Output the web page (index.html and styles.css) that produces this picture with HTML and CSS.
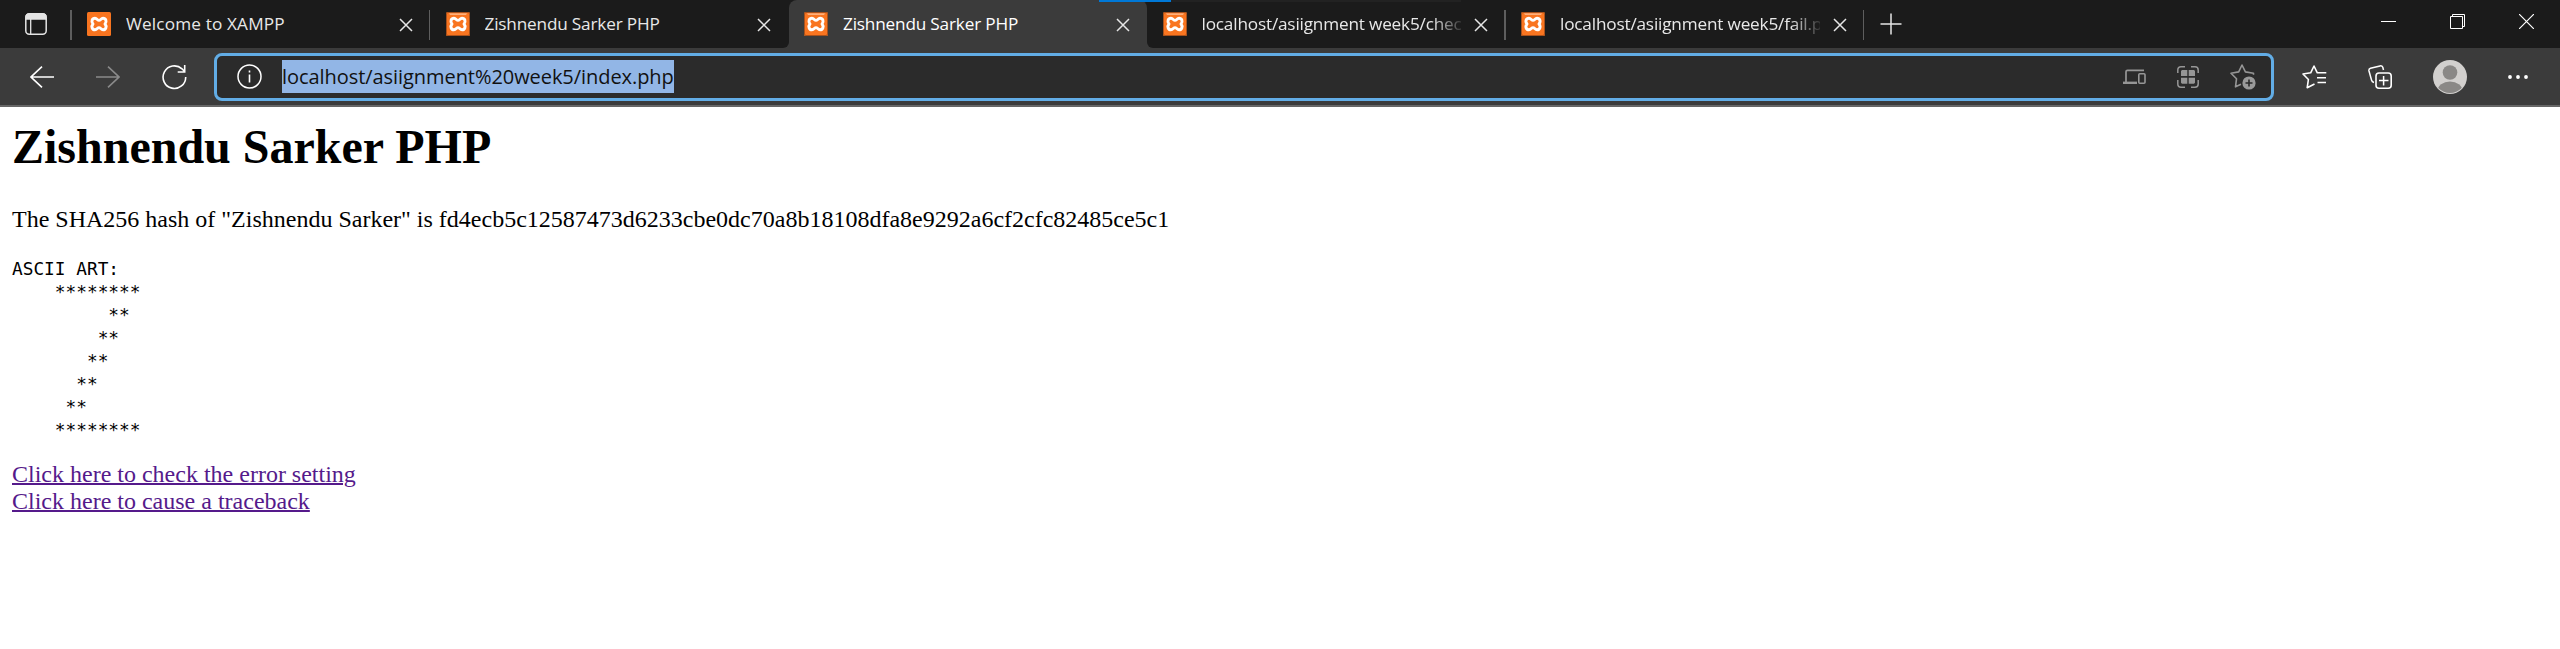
FILE: index.html
```html
<!DOCTYPE html>
<html lang="en">
<head>
<meta charset="utf-8">
<title>Zishnendu Sarker PHP</title>
<link rel="stylesheet" href="styles.css">
</head>
<body>
<svg class="defs" width="0" height="0">
  <symbol id="xampp" viewBox="0 0 24 24">
    <rect width="24" height="24" rx="1.5" fill="#f97520"/>
    <path d="M8 6.200C10 6.200 10.500 8.400 12 8.400S14 6.200 16 6.200C18.800 6.200 20.200 9.400 18 12C20.200 14.600 18.800 17.800 16 17.800C14 17.800 13.500 15.600 12 15.600S10 17.800 8 17.800C5.200 17.800 3.800 14.600 6 12C3.800 9.400 5.200 6.200 8 6.200z" fill="none" stroke="#fff" stroke-width="2.900" stroke-linejoin="round"/>
  </symbol>
  <symbol id="gloss" viewBox="0 0 24 24">
    <rect x=".5" y=".5" width="23" height="23" rx="1.500" fill="none" stroke="#a8511c"/>
    <path d="M3 1.500h18l-1 1.200H4z" fill="#ffc49b"/>
  </symbol>
  <symbol id="close" viewBox="0 0 14 14"><path d="M1 1l12 12M13 1L1 13" stroke="#e6e6e6" stroke-width="1.500" fill="none"/></symbol>
</svg>
<header class="browser">
  <div class="tabs">
    <div class="tab-menu">
      <svg width="22" height="22" viewBox="0 0 22 22"><rect x=".8" y=".8" width="20.400" height="20.400" rx="3.500" fill="none" stroke="#e4e4e4" stroke-width="1.500"/><path d="M1 6V4q0-3 3-3h14q3 0 3 3v2zM5.700 6v15" fill="#e4e4e4" stroke="#e4e4e4" stroke-width="1.300"/></svg>
    </div>
    <div class="tab ruled"><svg class="fav"><use href="#xampp"/></svg><span class="label wide">Welcome to XAMPP</span><svg class="x"><use href="#close"/></svg></div>
    <div class="tab before-active"><svg class="fav"><use href="#xampp"/><use href="#gloss"/></svg><span class="label">Zishnendu Sarker PHP</span><svg class="x"><use href="#close"/></svg></div>
    <div class="tab active"><svg class="fav"><use href="#xampp"/><use href="#gloss"/></svg><span class="label">Zishnendu Sarker PHP</span><svg class="x"><use href="#close"/></svg></div>
    <div class="tab ruled after-active"><svg class="fav"><use href="#xampp"/><use href="#gloss"/></svg><span class="label faded">localhost/asiignment week5/check.php</span><svg class="x"><use href="#close"/></svg></div>
    <div class="tab ruled"><svg class="fav"><use href="#xampp"/><use href="#gloss"/></svg><span class="label faded">localhost/asiignment week5/fail.php</span><svg class="x"><use href="#close"/></svg></div>
    <svg class="plus" width="22" height="22" viewBox="0 0 22 22"><path d="M11 .5v21M.5 11h21" stroke="#e6e6e6" stroke-width="1.500"/></svg>
    <div class="window-buttons">
      <svg width="15" height="15" viewBox="0 0 15 15"><path d="M0 7.500h15" stroke="#fff"/></svg>
      <svg width="15" height="15" viewBox="0 0 15 15"><path d="M.5 2.500h12v12H.5zM2.500 2.500v-2h12v12h-2" stroke="#fff" fill="none"/></svg>
      <svg width="15" height="15" viewBox="0 0 15 15"><path d="M0 0l15 15M15 0L0 15" stroke="#fff" stroke-width="1.200"/></svg>
    </div>
    <div class="progress"></div>
  </div>
  <div class="toolbar">
    <nav class="nav">
      <svg width="24" height="22" viewBox="0 0 24 22"><path d="M12 .6L1 11l11 10.400M1 11h23" fill="none" stroke="#fff" stroke-width="1.600"/></svg>
      <svg width="24" height="22" viewBox="0 0 24 22"><path d="M12 .6L23 11 12 21.400M23 11H0" fill="none" stroke="#8a8a8a" stroke-width="1.600"/></svg>
      <svg width="25" height="26" viewBox="0 0 25 26"><path d="M23.700 13A11.300 11.300 0 1 1 20 4.800l2.600 2.700M22.700 1v7h-7" fill="none" stroke="#fff" stroke-width="1.600"/></svg>
    </nav>
    <div class="address">
      <svg width="25" height="25" viewBox="0 0 25 25"><circle cx="12.500" cy="12.500" r="11.500" fill="none" stroke="#fff" stroke-width="1.500"/><path d="M12.500 10.500v8M12.500 6.500v2" stroke="#fff" stroke-width="1.600"/></svg>
      <span class="url">localhost/asiignment%20week5/index.php</span>
      <div class="page-actions">
        <svg width="23" height="16" viewBox="0 0 23 16"><path d="M21 1.300H4.500Q3 1.300 3 2.800V13" fill="none" stroke="#969696" stroke-width="1.700"/><path d="M0 12.600h14v2.400H0z" fill="#969696"/><rect x="15.800" y="4.800" width="6.200" height="9.400" rx="1" fill="none" stroke="#969696" stroke-width="1.600"/></svg>
        <svg width="22" height="22" viewBox="0 0 22 22"><path d="M.8 7V4Q.8.800 4 .8h4M14 .8h4q3.200 0 3.200 3.200v3M21.200 14v4q0 3.200-3.200 3.200h-4M8 21.200H4Q.8 21.200.8 18v-4" fill="none" stroke="#969696" stroke-width="1.500"/><path d="M5 4h5.300v6H4V5zM11.700 4H17l1 1v5h-6.300zM4 11.700h6.300v6H5l-1-1zM11.700 11.700H18v5l-1 1h-5.300z" fill="#969696"/></svg>
        <svg width="26" height="26" viewBox="0 0 26 26"><path d="M11 20.200L5.500 22.800l1-8L1 9.200l7.700-1.300L12 1l3.400 6.900L23.500 9.200v1.500" fill="none" stroke="#969696" stroke-width="1.600" stroke-linejoin="round"/><circle cx="19" cy="19" r="6.600" fill="#9a9a9a"/><path d="M19 15.500v7M15.500 19h7" stroke="#2b2b2b" stroke-width="1.600"/></svg>
      </div>
    </div>
    <div class="tools">
      <svg width="25" height="24" viewBox="0 0 25 24"><path d="M12.500 19L5.200 22.700l1.200-8.200L1 9l7.700-1.200L12 1l3.300 6.800h9M15 12.700h9M15.500 17.500h8.500" fill="none" stroke="#fff" stroke-width="1.600" stroke-linejoin="round"/></svg>
      <svg width="24" height="24" viewBox="0 0 24 24"><path d="M6 17.500Q4 17 3.500 15L1 6Q.5 4 2.500 3.300L12 .9q2-.4 2.800 1.400L15.500 5" fill="none" stroke="#fff" stroke-width="1.500"/><rect x="8" y="8" width="15.200" height="15.200" rx="3" fill="none" stroke="#fff" stroke-width="1.600"/><path d="M15.600 11v9.500M11 15.600h9.500" stroke="#fff" stroke-width="1.500"/></svg>
      <svg width="34" height="34" viewBox="0 0 34 34"><clipPath id="disc"><circle cx="17" cy="17" r="16"/></clipPath><circle cx="17" cy="17" r="17" fill="#d2d0ce"/><circle cx="17" cy="12.500" r="7.300" fill="#8a8886"/><ellipse cx="17" cy="31" rx="12.500" ry="9.500" fill="#8a8886" clip-path="url(#disc)"/></svg>
      <svg width="20" height="4" viewBox="0 0 20 4"><path d="M2 2h.01M10 2h.01M18 2h.01" stroke="#fff" stroke-width="3.800" stroke-linecap="round"/></svg>
    </div>
  </div>
</header>
<main class="page">
<h1 class="title">Zishnendu Sarker PHP</h1>
<p class="hash">The SHA256 hash of "Zishnendu Sarker" is fd4ecb5c12587473d6233cbe0dc70a8b18108dfa8e9292a6cf2cfc82485ce5c1</p>
<pre class="art">ASCII ART:
    ********
         **
        **
       **
      **
     **
    ********</pre>
<a class="link" href="#">Click here to check the error setting</a><br>
<a class="link" href="#">Click here to cause a traceback</a>
</main>
</body>
</html>
```

FILE: styles.css
```css
body {
  margin: 0;
  background: #fff;
  color: #000;
  font-family: "Liberation Serif", serif;
}
.defs { position: absolute; }
svg { display: block; flex: none; }
.browser { font-family: "Open Sans", sans-serif; }
.tabs {
  position: relative;
  display: flex;
  height: 48px;
  background: linear-gradient(to right, #1b1b1b 780px, #3b3b3b 780px, #3b3b3b 1156px, #1b1b1b 1156px);
}
.tab-menu {
  width: 71.5px;
  box-sizing: border-box;
  padding: 13px 0 0 25px;
  position: relative;
}
.tab-menu::after, .ruled::after {
  content: "";
  position: absolute;
  right: 0;
  top: 10px;
  width: 1.5px;
  height: 30px;
  background: #5e5e5e;
}
.tab {
  position: relative;
  display: flex;
  box-sizing: border-box;
  flex: none;
  width: 358.5px;
  height: 48px;
  padding: 12px 17.5px 0 15.5px;
  background: #1b1b1b;
}
.fav { width: 24px; height: 24px; margin-right: 15px; }
.label {
  flex: 1;
  overflow: hidden;
  white-space: nowrap;
  font-size: 17.2px;
  line-height: 24px;
  letter-spacing: -0.18px;
  color: #e8e8e8;
}
.wide { letter-spacing: 0.15px; }
.faded {
  -webkit-mask-image: linear-gradient(to right, #000 230px, transparent 264px);
  mask-image: linear-gradient(to right, #000 230px, transparent 264px);
}
.x { width: 14px; height: 14px; margin: 6px 0 0 13px; }
.before-active { border-radius: 0 0 6px 0; }
.after-active { border-radius: 0 0 0 6px; }
.active {
  background: linear-gradient(to bottom, #1b1b1b 10px, transparent 10px);
  z-index: 0;
}
.active::before {
  content: "";
  position: absolute;
  inset: 0;
  z-index: -1;
  background: #3b3b3b;
  border-radius: 8px 8px 0 0;
}
.active .label { color: #fff; }
.plus { margin: 13px 0 0 16px; }
.window-buttons {
  display: flex;
  gap: 54px;
  margin-left: auto;
  padding: 14px 26px 0 0;
}
.progress {
  position: absolute;
  left: 1099px;
  top: 0;
  width: 362px;
  height: 2px;
  background: linear-gradient(to right, #0078d7 72px, #222 72px);
}
.toolbar {
  display: flex;
  align-items: center;
  height: 57px;
  background: #3b3b3b;
  border-bottom: 2px solid #666;
}
.nav {
  display: flex;
  align-items: center;
  gap: 42px;
  width: 184px;
  padding-left: 30px;
}
.address {
  display: flex;
  align-items: center;
  box-sizing: border-box;
  width: 2060px;
  height: 48px;
  padding: 0 15px 0 20px;
  border: 3px solid #62ade6;
  border-radius: 8px;
  background: #2b2b2b;
}
.url {
  margin-left: 20px;
  height: 33px;
  line-height: 33px;
  font-size: 20px;
  letter-spacing: -0.06px;
  background: #92b6e6;
  color: #111;
}
.page-actions { display: flex; align-items: center; gap: 31px; margin-left: auto; }
.tools { display: flex; align-items: center; margin-left: 28px; gap: 41px; }
.page { padding: 13px 12px; font-size: 24px; line-height: 27px; }
.title { margin: 0; font-size: 48px; line-height: 54px; }
.hash { margin: 32px 0 24px; }
.art {
  margin: 0 0 20px;
  font-family: "DejaVu Sans Mono", monospace;
  font-size: 17.8px;
  line-height: 23px;
}
.link { color: #551a8b; text-decoration-thickness: 2px; }
```
